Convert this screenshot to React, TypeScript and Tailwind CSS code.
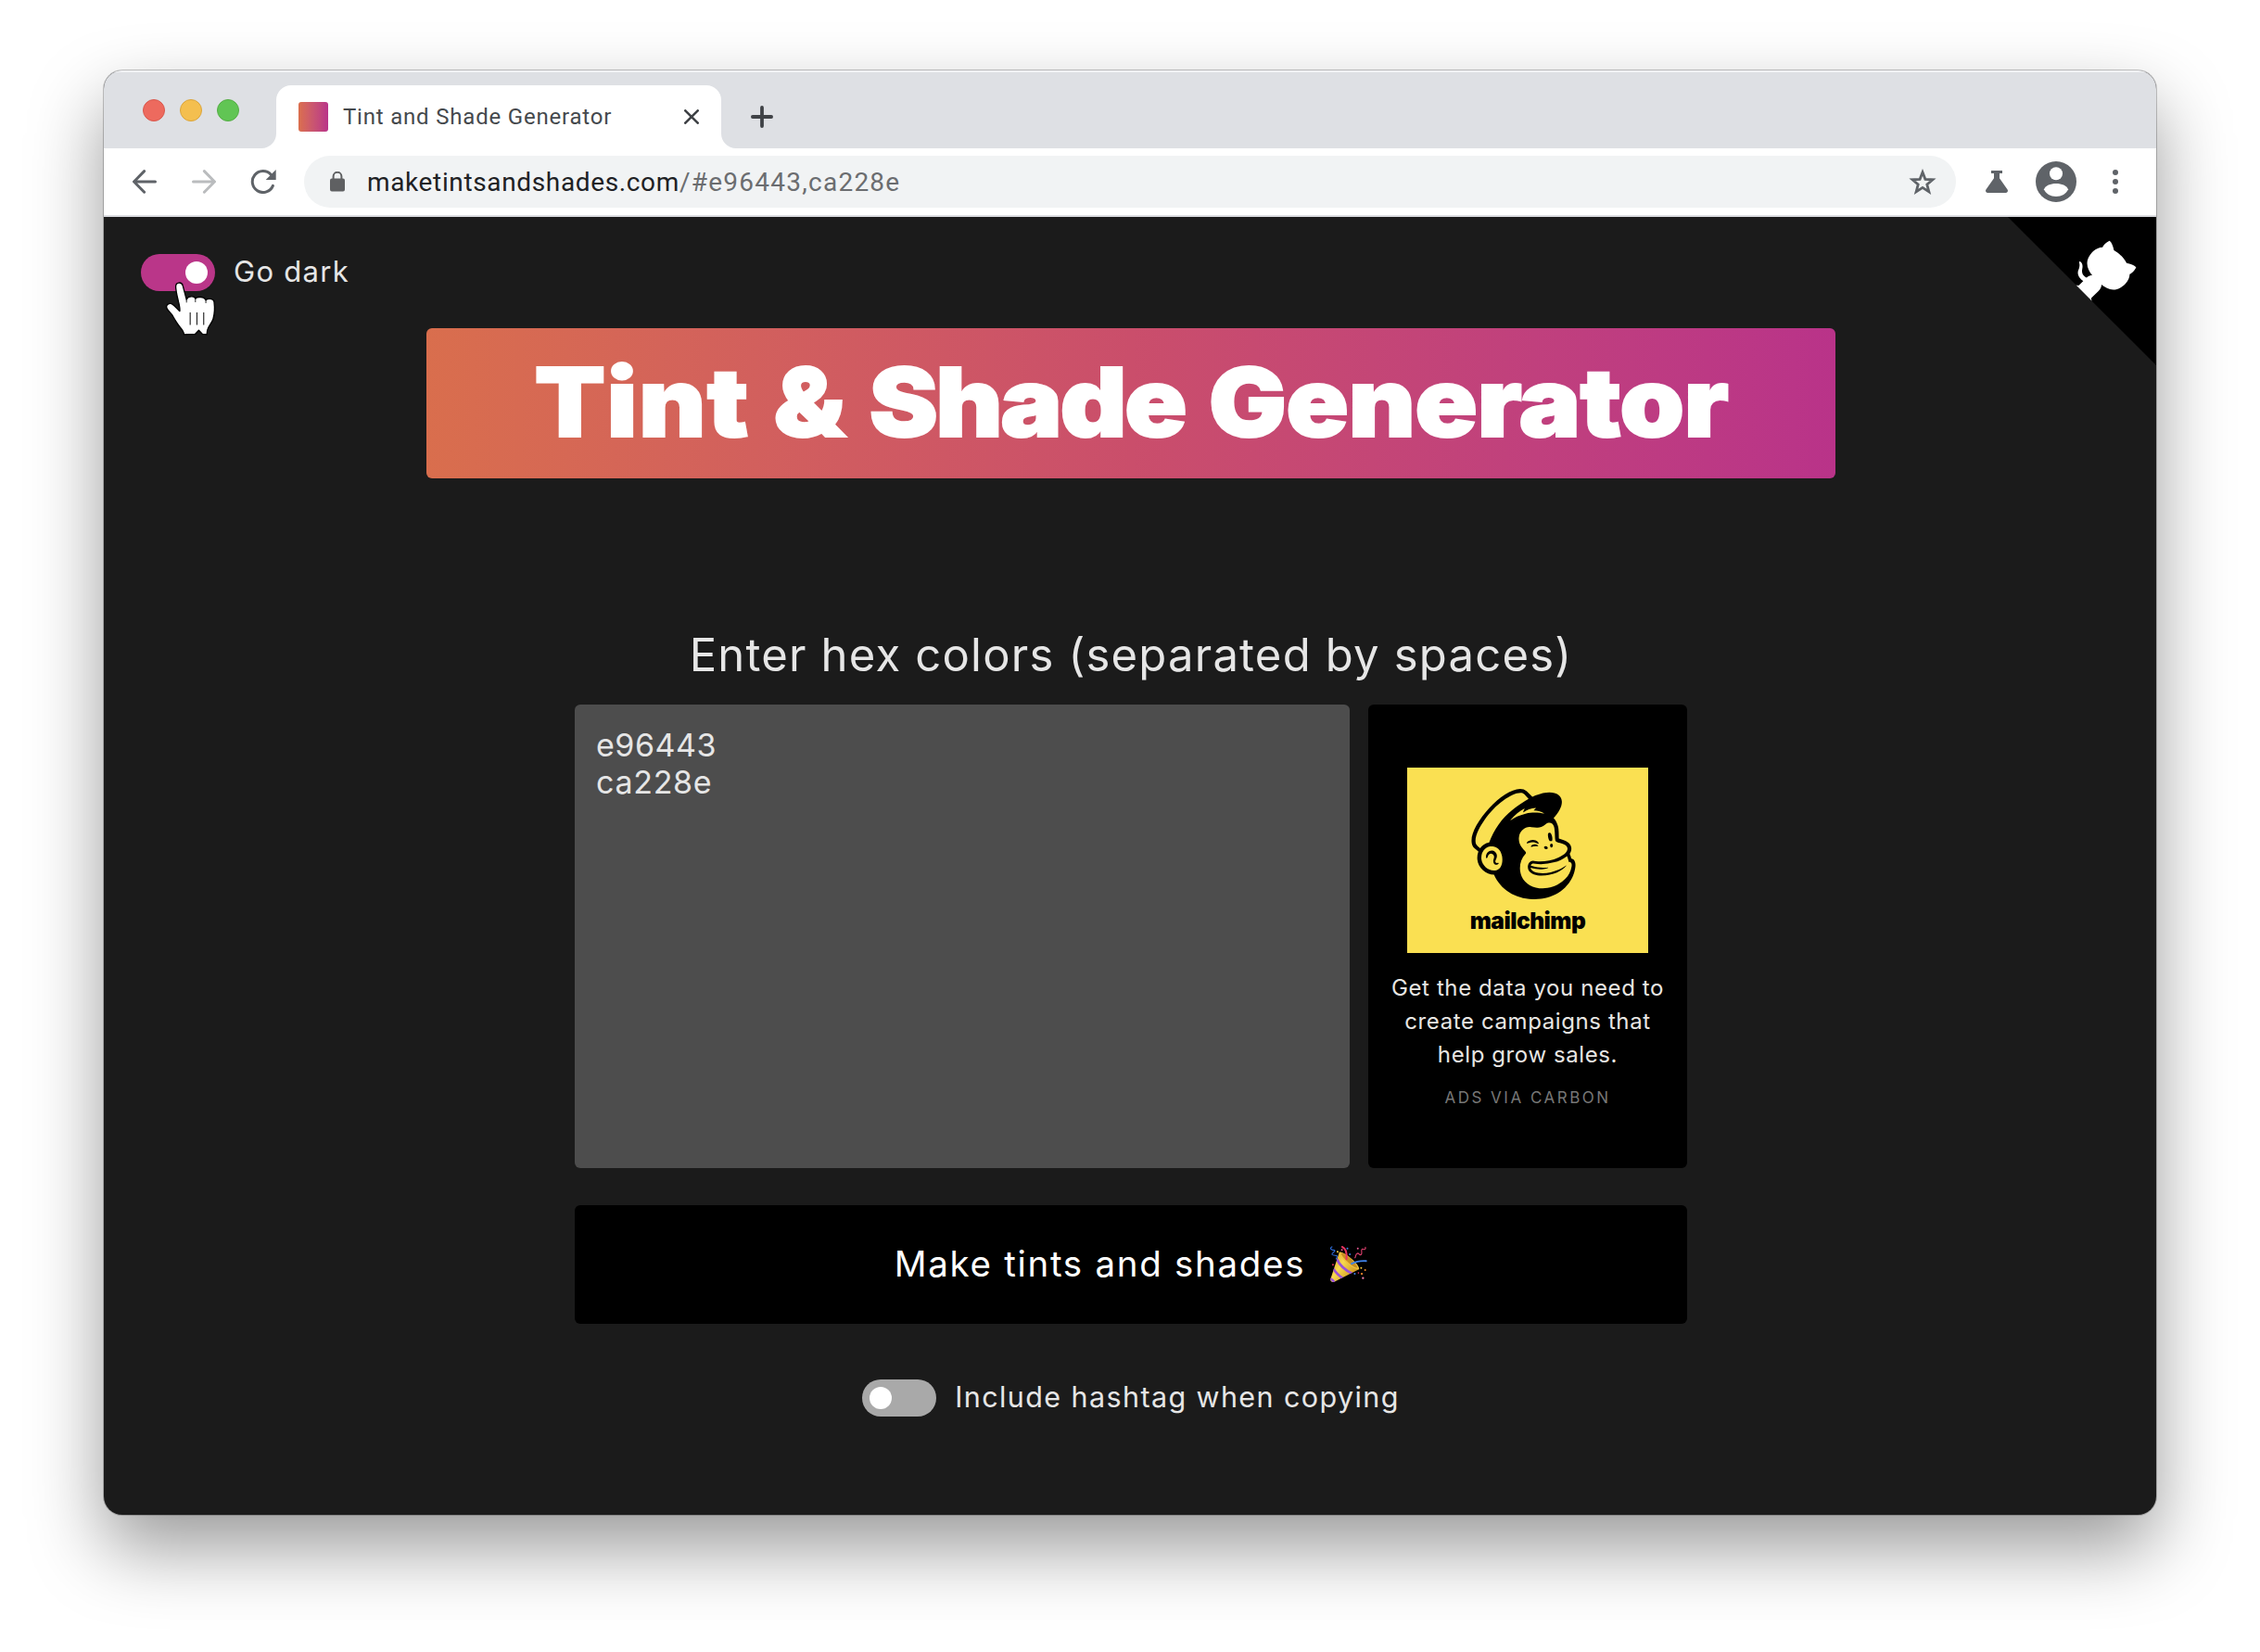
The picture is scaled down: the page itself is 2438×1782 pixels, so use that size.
import type { ReactNode } from "react";
import { SiMailchimp } from "react-icons/si";

function TabFoot({ side }: { side: "left" | "right" }) {
  return (
    <svg viewBox="0 0 16 16" className="size-4 shrink-0 self-end fill-white">
      <path d={side === "left" ? "M16 0V16H0A16 16 0 0 0 16 0Z" : "M0 0V16H16A16 16 0 0 1 0 0Z"} />
    </svg>
  );
}

function TabBar() {
  return (
    <div className="flex h-[84px] bg-[#dee0e4] shadow-[inset_0_2px_0_#f1f2f4]">
      <div className="ml-[42px] mt-[31px] flex h-6 w-[128px] shrink-0 gap-4">
        <span className="size-6 rounded-full border border-[#d9584d] bg-[#ed6a5e]" />
        <span className="size-6 rounded-full border border-[#dba53c] bg-[#f4bf4f]" />
        <span className="size-6 rounded-full border border-[#55ad45] bg-[#61c554]" />
      </div>
      <TabFoot side="left" />
      <div className="mt-4 flex h-[68px] w-[480px] items-center rounded-t-2xl bg-white pl-6 pr-6">
        <span className="size-8 rounded-[3px] bg-linear-to-r from-[#db6f4c] to-[#b93389]" />
        <span className="ml-4 font-[Roboto] text-[24px] tracking-[0.8px] text-[#45494d]">
          Tint and Shade Generator
        </span>
        <svg viewBox="0 0 16 16" className="ml-auto size-4 stroke-[#3f4246]" strokeWidth="2.6" strokeLinecap="round">
          <path d="M1.3 1.3 14.7 14.7M14.7 1.3 1.3 14.7" />
        </svg>
      </div>
      <TabFoot side="right" />
      <svg viewBox="0 0 24 24" className="ml-4 mt-[38px] size-6 stroke-[#3f4246]" strokeWidth="3.8" strokeLinecap="round">
        <path d="M12 1.9V22.1M1.9 12H22.1" />
      </svg>
    </div>
  );
}

function Toolbar() {
  return (
    <div className="flex h-[74px] items-center border-b-2 border-[#dcdde1] bg-white pl-[31px]">
      <svg viewBox="0 0 26 26" className="size-[26px] fill-none stroke-[#5f6368]" strokeWidth="3" strokeLinecap="round">
        <path d="M24.5 13H1.8M12.6 1.6 1.5 13 12.6 24.2" />
      </svg>
      <svg viewBox="0 0 26 26" className="ml-[38px] size-[26px] fill-none stroke-[#babcbe]" strokeWidth="3" strokeLinecap="round">
        <path d="M1.5 13H24.2M13.4 1.6 24.5 13 13.4 24.2" />
      </svg>
      <svg viewBox="0 0 28 26" className="ml-[37px] h-[26px] w-7 fill-none stroke-[#5f6368]" strokeWidth="3" strokeLinecap="round">
        <path d="M24.4 17.4A11.5 11.5 0 1 1 22.2 5.2" />
        <path d="M27.7 0V11H16.7Z" className="fill-[#5f6368] stroke-none" />
      </svg>
      <div className="ml-[30px] flex h-14 w-[1782px] items-center rounded-full bg-[#f1f3f4] pl-7 pr-[21px]">
        <svg viewBox="0 0 16 22" className="h-[22px] w-4 fill-[#5f6062]">
          <path d="M2 7.5H14A2 2 0 0 1 16 9.5V19.5A2 2 0 0 1 14 21.5H2A2 2 0 0 1 0 19.5V9.5A2 2 0 0 1 2 7.5Z" />
          <path d="M3.6 8V5.2A4.4 4.4 0 0 1 12.4 5.2V8" className="fill-none stroke-[#5f6062]" strokeWidth="2" />
        </svg>
        <span className="ml-6 pt-0.5 font-[Roboto] text-[28px] tracking-[0.64px] text-[#202124]">
          maketintsandshades.com
        </span>
        <span className="pt-0.5 font-[Roboto] text-[28px] tracking-[1.25px] text-[#6b6d70]">/#e96443,ca228e</span>
        <svg viewBox="0 0 30 29" className="ml-auto h-[29px] w-[30px] fill-none stroke-[#5f6368]" strokeWidth="2.8">
          <path d="M15 3.8 17.9 11.3 26 11.8 19.8 17 21.9 24.9 15 20.4 8.1 24.9 10.2 17 4 11.8 12.1 11.3Z" />
        </svg>
      </div>
      <svg viewBox="0 0 24 24" className="ml-8 size-6 fill-[#5f6368]">
        <path d="M6 0H18V3H15V8.2L23.6 20.4C24.6 22.2 23.6 24 21.8 24H2.2C.4 24-.6 22.2.4 20.4L9 8.2V3H6Z" />
      </svg>
      <svg viewBox="0 0 44 44" className="ml-[30px] size-11">
        <circle cx="22" cy="22" r="22" className="fill-[#5f6368]" />
        <circle cx="22" cy="13.2" r="7" className="fill-white" />
        <path d="M9 30.2C10.5 26 16 23.9 22 23.9S33.5 26 35 30.2C33 35 28 37.9 22 37.9S11 35 9 30.2Z" className="fill-white" />
      </svg>
      <svg viewBox="0 0 6 26" className="ml-[39px] h-[26px] w-1.5 fill-[#5f6368]">
        <circle cx="3" cy="3" r="3" />
        <circle cx="3" cy="13" r="3" />
        <circle cx="3" cy="23" r="3" />
      </svg>
    </div>
  );
}

function Switch({ on, children }: { on: boolean; children?: ReactNode }) {
  return (
    <span
      className={
        on
          ? "relative flex h-10 w-20 shrink-0 items-center justify-end rounded-full bg-[#ba3689] px-2"
          : "relative flex h-10 w-20 shrink-0 items-center rounded-full bg-[#a9a9a9] px-2"
      }
    >
      <span className="size-6 rounded-full bg-white" />
      {children}
    </span>
  );
}

function HandCursor() {
  return (
    <svg viewBox="144 430 166 180" className="absolute left-[26px] top-[29px] h-[60px] w-[55px]">
      <path
        d="M206 604C205 594 200 588 193 580C182 567 176 556 167 540C161 530 147 523 149 512C151 502 163 501 170 507C178 513 184 522 192 528C193 520 191 510 188 498C184 480 179 462 179 448C179 432 199 432 202 445C206 460 210 475 214 490C219 478 240 477 243 487C248 480 272 480 277 492C283 485 303 486 304 499C306 515 306 535 301 552C297 567 285 577 282 590L280 604L266 603L254 590L242 603Z"
        className="fill-white stroke-black"
        strokeWidth="4"
        strokeLinejoin="round"
      />
      <path d="M226 532V573M248 532V573M270 532V573" className="fill-none stroke-[#222]" strokeWidth="3.4" />
      <path d="M214 489V500M243 487V499M277 491V502" className="fill-none stroke-black" strokeWidth="2.5" />
    </svg>
  );
}

function GithubCorner() {
  return (
    <svg viewBox="0 0 250 250" className="absolute right-0 top-0 size-40">
      <path d="M0 0 115 115H130L142 142 250 250V0Z" className="fill-black" />
      <g className="fill-white">
        <path d="M128.3,109.0 C113.8,99.7 119.0,89.6 119.0,89.6 C122.0,82.7 120.5,78.6 120.5,78.6 C119.2,72.0 123.4,76.3 123.4,76.3 C127.3,80.9 125.5,87.3 125.5,87.3 C122.9,97.6 130.6,101.9 134.4,103.2" />
        <path d="M115.0,115.0 C114.9,115.1 118.7,116.5 119.8,115.4 L133.7,101.6 C136.9,99.2 139.9,98.4 142.2,98.6 C133.8,88.0 127.5,74.4 143.8,58.0 C148.5,53.4 154.0,51.2 159.7,51.0 C160.3,49.4 163.2,43.6 171.4,40.1 C171.4,40.1 176.1,42.5 178.8,56.2 C183.1,58.6 187.2,61.8 190.9,65.4 C194.5,69.0 197.7,73.2 200.1,77.6 C213.8,80.2 216.3,84.9 216.3,84.9 C212.7,93.1 206.9,96.0 205.4,96.6 C205.1,102.4 203.0,107.8 198.3,112.5 C181.9,128.9 168.3,122.5 157.7,114.1 C157.9,116.9 156.7,120.9 152.7,124.9 L141.0,136.5 C139.8,137.7 141.6,141.9 141.8,141.8 Z" />
      </g>
    </svg>
  );
}

function PartyPopper() {
  return (
    <svg viewBox="70 68 124 122" className="mb-[2px] size-[41px] shrink-0 fill-none">
      <defs>
        <linearGradient id="cone" x1="0" y1="0" x2="1" y2="0.7">
          <stop offset="0" stopColor="#d9971f" />
          <stop offset="0.45" stopColor="#f7d94f" />
          <stop offset="1" stopColor="#c98a17" />
        </linearGradient>
        <clipPath id="coneClip">
          <path d="M103 90 168 146 86 187C79 190 72 185 74 178Z" />
        </clipPath>
      </defs>
      <path d="M103 90 168 146 86 187C79 190 72 185 74 178Z" fill="url(#cone)" />
      <g clipPath="url(#coneClip)" stroke="#9a52d6" strokeWidth="8">
        <path d="M94 112C104 134 122 150 148 162" />
        <path d="M82 142C90 156 102 168 118 178" />
        <path d="M70 174C78 178 86 186 90 194" />
      </g>
      <path d="M103 90C112 88 130 100 145 114C158 126 170 140 167 146C158 148 140 138 125 124C112 112 100 98 103 90Z" fill="#efc23e" />
      <path d="M108 93C117 93 131 103 144 116C154 126 163 137 162 142C153 142 141 133 129 121C117 110 108 99 108 93Z" fill="#c98e22" />
      <path d="M112 73C124 78 128 92 126 113" stroke="#e8335f" strokeWidth="6" strokeLinecap="round" />
      <path d="M143 128C158 120 174 118 190 119" stroke="#3f83ea" strokeWidth="6" strokeLinecap="round" />
      <path d="M80 72C68 78 78 84 86 84C94 86 76 94 79 98C84 104 98 98 95 106C94 110 92 112 92 114" stroke="#2f6fe0" strokeWidth="3.4" />
      <path d="M187 73C192 82 182 82 178 80C170 84 180 92 174 98C168 102 168 94 162 94C154 96 158 104 153 110" stroke="#e0416f" strokeWidth="3.4" />
      <circle cx="97" cy="89" r="3" fill="#f7d94f" />
      <circle cx="111" cy="83" r="3" fill="#ea5b95" />
      <circle cx="129" cy="78" r="3" fill="#3f83ea" />
      <circle cx="137" cy="97" r="3" fill="#3f83ea" />
      <circle cx="163" cy="78" r="3" fill="#ea5b95" />
      <circle cx="82" cy="131" r="3" fill="#e8335f" />
      <circle cx="174" cy="142" r="3" fill="#f7c93f" />
      <circle cx="187" cy="149" r="3" fill="#f08a2c" />
      <circle cx="176" cy="161" r="3.5" fill="#f08a2c" />
      <circle cx="153" cy="161" r="3" fill="#3f83ea" />
      <circle cx="165" cy="158" r="2.5" fill="#e8335f" />
      <circle cx="180" cy="175" r="3.5" fill="#ee7fae" />
    </svg>
  );
}

function CarbonAd() {
  return (
    <aside className="flex h-[500px] w-[344px] flex-col items-center rounded-md bg-black pt-[68px] text-center">
      <div className="flex h-[200px] w-[260px] flex-col items-center bg-[#fae052] pt-[23px] text-black">
        <SiMailchimp className="mr-[9px] size-[119px]" />
        <span className="mt-[7px] text-[24.5px] font-black leading-8 tracking-[-0.5px]">mailchimp</span>
      </div>
      <p className="mt-5 whitespace-nowrap text-[24px] leading-9 tracking-[0.6px] text-[#e8e6e3]">
        Get the data you need to
        <br />
        create campaigns that
        <br />
        help grow sales.
      </p>
      <span className="mt-4 text-[17px] font-normal leading-6 tracking-[2.5px] text-[#777]">ADS VIA CARBON</span>
    </aside>
  );
}

export default function App() {
  return (
    <div className="h-[1782px] w-[2438px] overflow-hidden bg-white px-[112px] pt-[76px]">
      <div className="h-[1558px] overflow-hidden rounded-[20px] bg-[#1b1b1b] shadow-[0_0_0_1px_rgba(0,0,0,0.22),0_36px_80px_rgba(0,0,0,0.4)]">
        <TabBar />
        <Toolbar />
        <main className="relative flex h-[1400px] flex-col items-center pl-0.5 pt-10 font-[Inter] font-normal text-[#e6e6e6]">
          <GithubCorner />
          <label className="ml-[38px] flex h-10 items-center self-start">
            <Switch on>
              <HandCursor />
            </Switch>
            <span className="mb-0.5 ml-5 text-[31px] leading-9 tracking-[1.3px]">Go dark</span>
          </label>
          <h1 className="mt-10 flex h-[162px] w-[1520px] items-center justify-center rounded-md bg-linear-to-r from-[#d96e4d] via-[#ca4e6b] to-[#b93389] pb-[3px] text-white">
            <span className="inline-block scale-x-[1.085] whitespace-nowrap text-[103px] font-black leading-none [-webkit-text-stroke:2px_white] [word-spacing:3px]">
              <span className="tracking-[1.2px]">Tint</span> &amp; <span className="tracking-[-2.4px]">Shade</span>{" "}
              <span className="tracking-[-0.6px]">Generator</span>
            </span>
          </h1>
          <h2 className="mt-[138px] flex h-[106px] items-center whitespace-nowrap text-[49px] tracking-[1.2px]">
            Enter hex colors (separated by spaces)
          </h2>
          <div className="flex gap-5">
            <div className="h-[500px] w-[836px] rounded-md bg-[#4d4d4d] px-[23px] py-6 text-[34px] leading-10">
              <p className="tracking-[0.5px]">e96443</p>
              <p className="tracking-[0.7px]">ca228e</p>
            </div>
            <CarbonAd />
          </div>
          <button className="mt-10 flex h-32 w-[1200px] items-center justify-center gap-[26px] rounded-md bg-black text-[38.5px] tracking-[1.7px] text-white">
            Make tints and shades
            <PartyPopper />
          </button>
          <label className="mt-[60px] flex h-10 items-center">
            <Switch on={false} />
            <span className="mb-0.5 ml-5 text-[30.5px] leading-9 tracking-[1.4px]">Include hashtag when copying</span>
          </label>
        </main>
      </div>
    </div>
  );
}
